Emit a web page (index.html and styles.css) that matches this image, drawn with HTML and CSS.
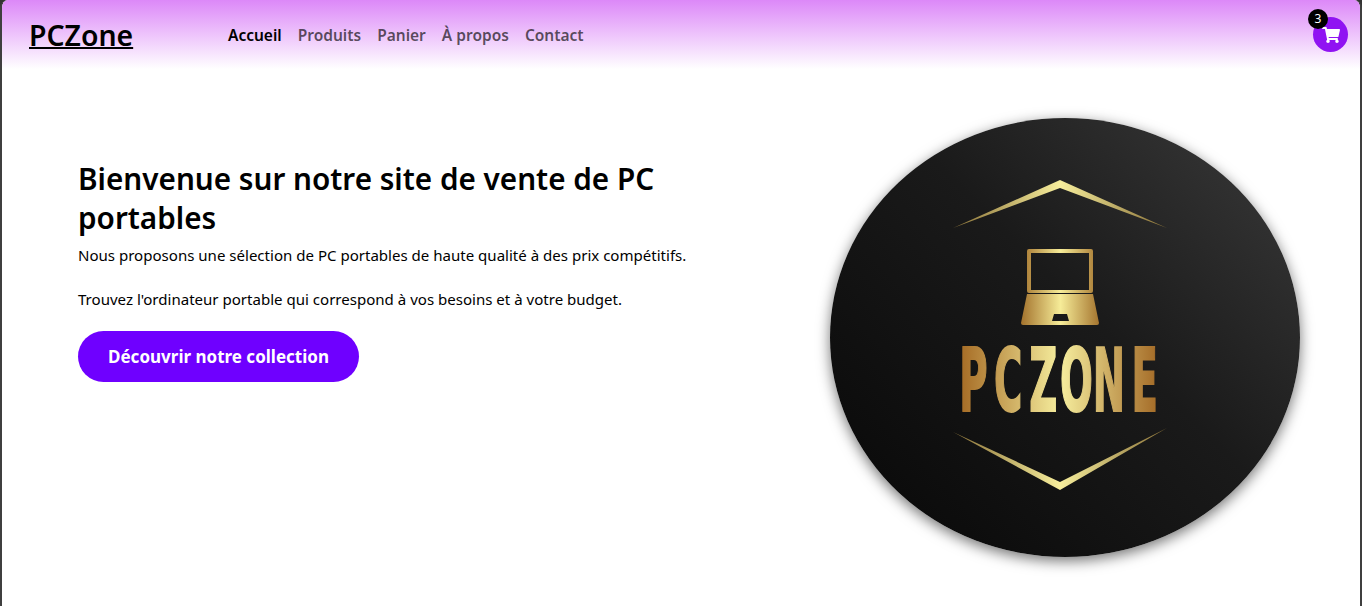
FILE: index.html
```html
<!DOCTYPE html>
<html lang="fr">
<head>
<meta charset="utf-8">
<title>PCZone</title>
<link rel="stylesheet" href="styles.css">
</head>
<body>
<div class="frame">
  <header class="topbar">
    <a class="brand" href="#">PCZone</a>
    <nav class="nav">
      <a class="nav-link active" href="#">Accueil</a>
      <a class="nav-link" href="#">Produits</a>
      <a class="nav-link" href="#">Panier</a>
      <a class="nav-link" href="#">À propos</a>
      <a class="nav-link" href="#">Contact</a>
    </nav>
    <a class="cart" href="#" aria-label="Panier">
      <svg class="cart-icon" viewBox="0 0 576 512"><path fill="#fff" d="M528.12 301.319l47.273-208C578.806 78.301 567.391 64 551.99 64H159.208l-9.166-44.81C147.758 8.021 137.93 0 126.529 0H24C10.745 0 0 10.745 0 24v16c0 13.255 10.745 24 24 24h69.883l70.248 343.435C147.325 417.1 136 435.222 136 456c0 30.928 25.072 56 56 56s56-25.072 56-56c0-15.674-6.447-29.835-16.824-40h209.647C430.447 426.165 424 440.326 424 456c0 30.928 25.072 56 56 56s56-25.072 56-56c0-22.172-12.888-41.332-31.579-50.405l5.517-24.276c3.413-15.018-8.002-29.319-23.403-29.319H218.117l-6.545-32h293.145c11.206 0 20.92-7.754 23.403-18.681z"/></svg>
      <span class="badge">3</span>
    </a>
  </header>
  <main class="hero">
    <section class="intro">
      <h1 class="title">Bienvenue sur notre site de vente de PC portables</h1>
      <p class="lead">Nous proposons une sélection de PC portables de haute qualité à des prix compétitifs.</p>
      <p class="lead">Trouvez l'ordinateur portable qui correspond à vos besoins et à votre budget.</p>
      <a class="cta" href="#">Découvrir notre collection</a>
    </section>
    <div class="logo">
      <svg class="logo-art" viewBox="0 0 470 439">
        <defs>
          <linearGradient id="chev" gradientUnits="userSpaceOnUse" x1="125" y1="0" x2="335" y2="0">
            <stop offset="0" stop-color="#8a7238"/><stop offset=".5" stop-color="#f7ee9c"/><stop offset="1" stop-color="#8a7238"/>
          </linearGradient>
          <linearGradient id="lap" gradientUnits="userSpaceOnUse" x1="192" y1="0" x2="269" y2="0">
            <stop offset="0" stop-color="#a5752f"/><stop offset=".5" stop-color="#f6ec98"/><stop offset="1" stop-color="#a5752f"/>
          </linearGradient>
          <linearGradient id="word" gradientUnits="userSpaceOnUse" x1="302" y1="0" x2="745" y2="0">
            <stop offset="0" stop-color="#a86f28"/><stop offset=".5" stop-color="#f6ee9e"/><stop offset="1" stop-color="#a46b27"/>
          </linearGradient>
        </defs>
        <polygon fill="url(#chev)" points="123,110 230,62 337,110 230,70"/>
        <polygon fill="url(#chev)" points="123,314 230,364 337,310 230,372"/>
        <path fill="url(#lap)" fill-rule="evenodd" d="M197 133q0-2 2-2h62q2 0 2 2v40q0 2-2 2h-62q-2 0-2-2zM201 135v37h58v-37z"/>
        <path fill="url(#lap)" fill-rule="evenodd" d="M197 176h66l6 29q0 2-2 2h-74q-2 0-2-2zM224 196l-2 7h17l-2-7z"/>
        <text class="logo-word" transform="scale(.44 1)" y="293" x="294 373 453 523 597 685" fill="url(#word)" stroke="url(#word)">PCZONE</text>
      </svg>
    </div>
  </main>
</div>
</body>
</html>
```

FILE: styles.css
```css
* { box-sizing: border-box; }
html, body { margin: 0; height: 100%; background: #333; }
body { overflow: hidden; font-family: "Noto Sans", "Open Sans", sans-serif; color: #000; }
.frame {
  height: 606px;
  background: #fff;
  border-left: 2px solid #3f3f3f;
  border-right: 2px solid #3f3f3f;
  border-radius: 8px 8px 0 0;
  overflow: hidden;
}
.topbar {
  display: flex;
  align-items: center;
  height: 69px;
  padding: 0 12px 0 27px;
  background: linear-gradient(180deg, #dc88f8 0%, #ffffff 100%);
}
.brand {
  width: 199px;
  flex: none;
  font-size: 28.4px;
  font-weight: 600;
  color: #000;
  text-decoration: underline;
  text-decoration-thickness: 2px;
}
.nav { display: flex; gap: 16px; }
.nav-link {
  font-size: 15.5px;
  font-weight: 600;
  color: rgba(0, 0, 0, .65);
  text-decoration: none;
}
.nav-link.active { color: #000; }
.cart {
  position: relative;
  display: flex;
  align-items: center;
  justify-content: center;
  width: 35px;
  height: 35px;
  margin-left: auto;
  border-radius: 50%;
  background: #9013f2;
}
.cart-icon { width: 18px; height: 16px; }
.badge {
  position: absolute;
  left: -5px;
  top: -8px;
  width: 20px;
  height: 20px;
  border-radius: 50%;
  background: #000;
  color: #fff;
  font-size: 12px;
  line-height: 20px;
  text-align: center;
}
.hero {
  display: flex;
  align-items: flex-start;
  justify-content: space-between;
  padding: 49px 60px 0 76px;
}
.intro { width: 620px; margin-top: 41px; }
.title {
  margin: 0 0 8px;
  font-size: 29.7px;
  font-weight: 600;
  line-height: 39px;
}
.lead { margin: 0 0 24px; font-size: 15.06px; line-height: 20px; }
.cta {
  display: inline-block;
  width: 281px;
  height: 51px;
  margin-top: -2px;
  border-radius: 26px;
  background: #6f00ff;
  color: #fff;
  font-size: 17px;
  font-weight: 700;
  line-height: 51px;
  text-align: center;
  text-decoration: none;
}
.logo {
  width: 470px;
  height: 439px;
  flex: none;
  border-radius: 50%;
  background: linear-gradient(45deg, #0b0b0b 12%, #1a1a1a 55%, #303030 85%);
  box-shadow: 0 4px 14px rgba(0, 0, 0, .55);
}
.logo-art { display: block; width: 100%; height: 100%; }
.logo-word {
  font-family: "DejaVu Sans", sans-serif;
  font-size: 88px;
  font-weight: 700;
  stroke-width: 1.5px;
  vector-effect: non-scaling-stroke;
}
```
